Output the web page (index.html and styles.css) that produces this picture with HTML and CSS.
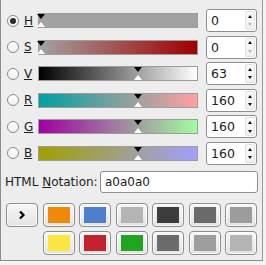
FILE: index.html
```html
<!DOCTYPE html>
<html>
<head>
<meta charset="utf-8">
<link rel="stylesheet" href="styles.css">
</head>
<body>
<div class="frame">
  <div class="rows">
    <div class="row">
      <span class="radio checked"></span>
      <span class="lbl"><u>H</u></span>
      <div class="slider bar-h"><div class="track"><span class="mk" style="left:0%"></span></div></div>
      <div class="spin"><span class="val">0</span><span class="step"><span class="up"></span><span class="down off"></span></span></div>
    </div>
    <div class="row">
      <span class="radio"></span>
      <span class="lbl"><u>S</u></span>
      <div class="slider bar-s"><div class="track"><span class="mk" style="left:0%"></span></div></div>
      <div class="spin"><span class="val">0</span><span class="step"><span class="up"></span><span class="down off"></span></span></div>
    </div>
    <div class="row">
      <span class="radio"></span>
      <span class="lbl"><u>V</u></span>
      <div class="slider bar-v"><div class="track"><span class="mk" style="left:63%"></span></div></div>
      <div class="spin"><span class="val">63</span><span class="step"><span class="up"></span><span class="down"></span></span></div>
    </div>
    <div class="row">
      <span class="radio"></span>
      <span class="lbl"><u>R</u></span>
      <div class="slider bar-r"><div class="track"><span class="mk" style="left:62.7%"></span></div></div>
      <div class="spin"><span class="val">160</span><span class="step"><span class="up"></span><span class="down"></span></span></div>
    </div>
    <div class="row">
      <span class="radio"></span>
      <span class="lbl"><u>G</u></span>
      <div class="slider bar-g"><div class="track"><span class="mk" style="left:62.7%"></span></div></div>
      <div class="spin"><span class="val">160</span><span class="step"><span class="up"></span><span class="down"></span></span></div>
    </div>
    <div class="row">
      <span class="radio"></span>
      <span class="lbl"><u>B</u></span>
      <div class="slider bar-b"><div class="track"><span class="mk" style="left:62.7%"></span></div></div>
      <div class="spin"><span class="val">160</span><span class="step"><span class="up"></span><span class="down"></span></span></div>
    </div>
  </div>
  <div class="hex-row">
    <span class="hex-label">HTML <u>N</u>otation:</span>
    <div class="hex-input">a0a0a0</div>
  </div>
  <div class="buttons">
    <div class="btn arrow-btn"><svg width="8" height="10" viewBox="0 0 8 10"><polyline points="2,1.5 5.5,5 2,8.5" fill="none" stroke="#000" stroke-width="2.2"/></svg></div>
    <div class="btn"><span class="sw" style="background:#f0880c"></span></div>
    <div class="btn"><span class="sw" style="background:#4e7fca"></span></div>
    <div class="btn"><span class="sw" style="background:#b4b4b4"></span></div>
    <div class="btn"><span class="sw" style="background:#3c3c3c"></span></div>
    <div class="btn"><span class="sw" style="background:#6a6a6a"></span></div>
    <div class="btn"><span class="sw" style="background:#9c9c9c"></span></div>
    <div class="empty"></div>
    <div class="btn"><span class="sw" style="background:#fae63e"></span></div>
    <div class="btn"><span class="sw" style="background:#c4222c"></span></div>
    <div class="btn"><span class="sw" style="background:#1fa51f"></span></div>
    <div class="btn"><span class="sw" style="background:#6b6b6b"></span></div>
    <div class="btn"><span class="sw" style="background:#9e9e9e"></span></div>
    <div class="btn"><span class="sw" style="background:#b4b4b4"></span></div>
  </div>
</div>
</body>
</html>
```
FILE: styles.css
```css
* { box-sizing: border-box; }
html, body { margin: 0; padding: 0; }
body {
  background: #f3f3f3;
  font-family: "DejaVu Sans", sans-serif;
  font-size: 12px;
  color: #1c1c1c;
  width: 266px;
  height: 265px;
  overflow: hidden;
}
.frame {
  width: 263px;
  height: 261px;
  background: #ededed;
  border-left: 1px solid #8c8c8c;
  border-right: 1px solid #9a9a9a;
  border-bottom: 1px solid #8c8c8c;
  padding: 9px 4px 0 4px;
  display: flex;
  flex-direction: column;
}
.rows { display: flex; flex-direction: column; gap: 3.6px; }
.row { display: flex; align-items: center; height: 23px; }
.radio {
  flex: none;
  width: 12px; height: 12px;
  margin-left: 2px;
  border-radius: 50%;
  border: 1px solid #8a8a8a;
  background: linear-gradient(#ffffff, #efefef);
  position: relative;
}
.radio.checked::after {
  content: "";
  position: absolute;
  left: 2px; top: 2px;
  width: 6px; height: 6px;
  border-radius: 50%;
  background: #2a2a2a;
}
.lbl { flex: none; width: 14px; margin-left: 5px; line-height: 14px; }
.slider {
  flex: none;
  width: 160px; height: 15px;
  border: 1px solid #a29c99;
  position: relative;
}
.bar-h { background: #a2a2a2; }
.bar-s { background: linear-gradient(to right, #a2a2a2, #a00000); }
.bar-v { background: linear-gradient(to right, #000000, #ffffff); }
.bar-r { background: linear-gradient(to right, #00a0a0, #ffa0a0); }
.bar-g { background: linear-gradient(to right, #a000a0, #a0ffa0); }
.bar-b { background: linear-gradient(to right, #a0a000, #a0a0ff); }
.track { position: absolute; left: 2px; right: 2px; top: 0; bottom: 0; }
.mk { position: absolute; top: 0; bottom: 0; width: 0; }
.mk::before {
  content: "";
  position: absolute;
  left: -4px; top: 0;
  border-left: 4px solid transparent;
  border-right: 4px solid transparent;
  border-top: 5px solid #000;
}
.mk::after {
  content: "";
  position: absolute;
  left: -4px; bottom: 0;
  border-left: 4px solid transparent;
  border-right: 4px solid transparent;
  border-bottom: 5px solid #fff;
}
.spin {
  flex: none;
  width: 51px; height: 23px;
  margin-left: 8px;
  border: 1px solid #8e8e8e;
  border-radius: 3px;
  background: #fff;
  display: flex;
}
.val { flex: 1; padding-left: 4px; line-height: 21px; font-size: 12.5px; }
.step {
  width: 10px;
  margin: 1px 1px 1px 0;
  display: flex;
  flex-direction: column;
  border: 1px solid #e2e2e2;
  border-radius: 2px;
  background: linear-gradient(#fafafa, #f0f0f0);
}
.up, .down { flex: 1; display: flex; align-items: center; justify-content: center; }
.up::before {
  content: "";
  border-left: 2.5px solid transparent;
  border-right: 2.5px solid transparent;
  border-bottom: 3px solid #111;
}
.down::before {
  content: "";
  border-left: 2.5px solid transparent;
  border-right: 2.5px solid transparent;
  border-top: 3px solid #111;
}
.down.off::before { border-top-color: #b8b8b8; }
.hex-row { display: flex; align-items: center; height: 22px; margin-top: 6px; }
.hex-label { white-space: nowrap; }
.hex-input {
  margin-left: auto;
  width: 158px; height: 22px;
  border: 1px solid #8e8e8e;
  border-radius: 3px;
  background: #fff;
  padding-left: 4px;
  line-height: 20px;
}
.buttons {
  margin-top: 10px;
  margin-left: 1px;
  display: grid;
  grid-template-columns: repeat(7, 32px);
  grid-auto-rows: 24px;
  column-gap: 4.5px;
  row-gap: 4px;
}
.btn {
  border: 1px solid #8e8e8e;
  border-radius: 4px;
  background: linear-gradient(#f7f7f7, #e3e3e3);
  box-shadow: inset 0 0 0 1px rgba(255,255,255,0.7);
  padding: 3px 4px;
  display: flex;
}
.sw { flex: 1; }
.arrow-btn { align-items: center; justify-content: center; padding: 0; }
.arrow-btn svg { display: block; }
```
